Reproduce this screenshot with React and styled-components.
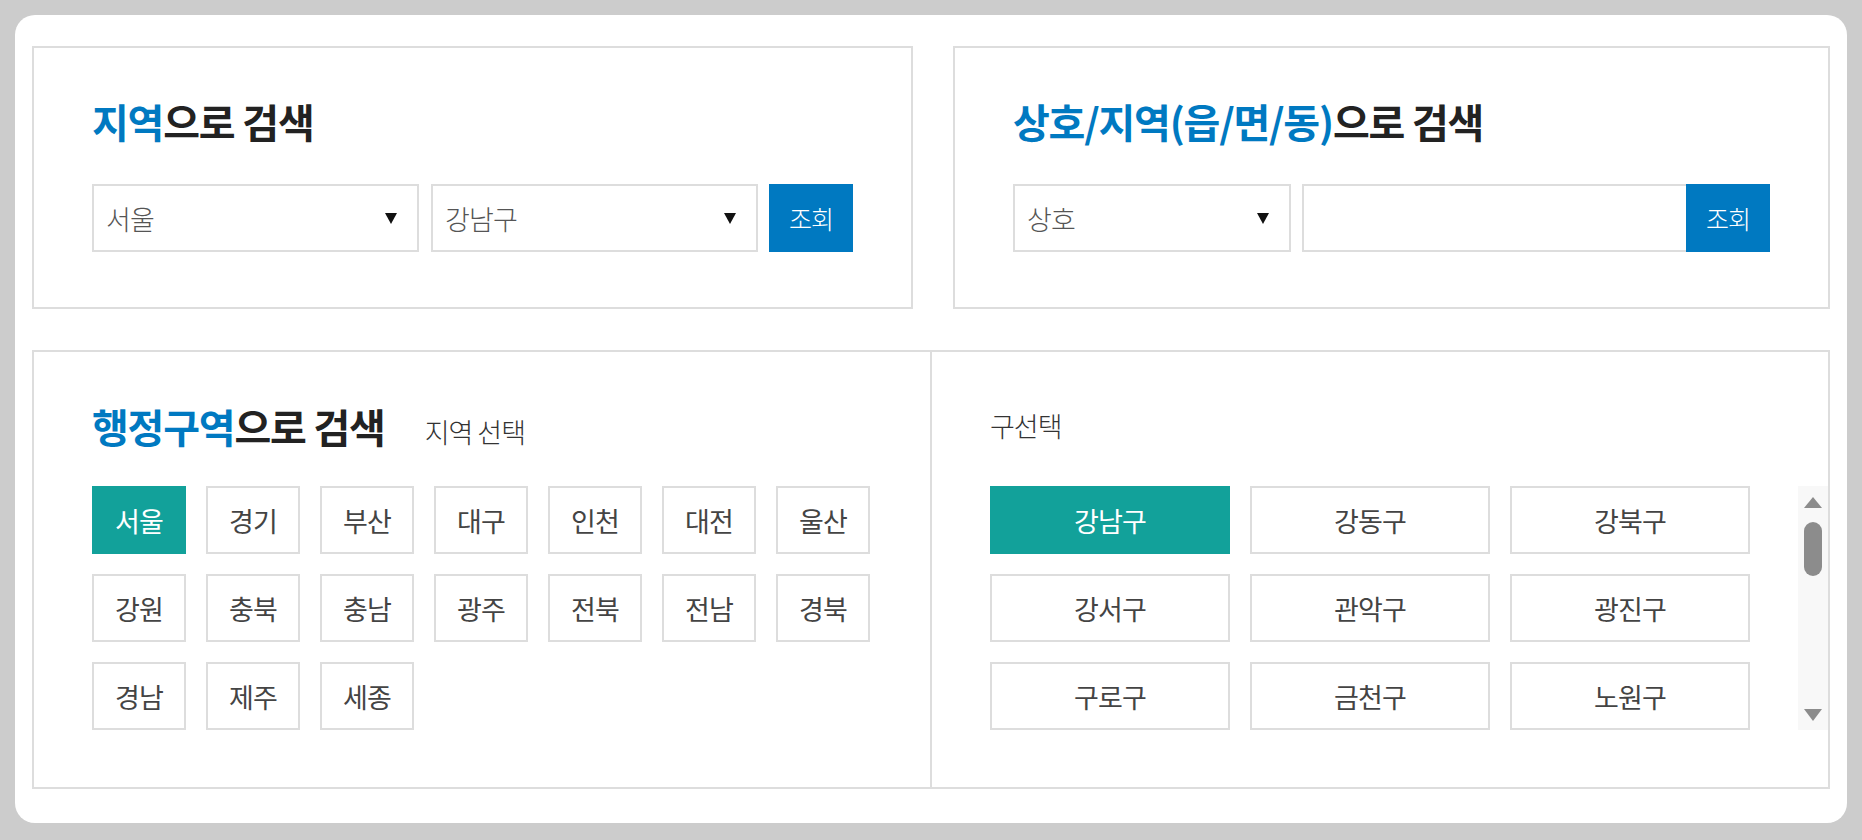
import React from 'react';
import styled, { createGlobalStyle } from 'styled-components';

const GlobalStyle = createGlobalStyle`
  html, body {
    margin: 0;
    padding: 0;
    background: #cccccc;
  }
  body {
    font-family: "Noto Sans CJK KR", "Noto Sans", sans-serif;
    color: #222222;
  }
  * {
    box-sizing: border-box;
  }
`;

const BLUE = '#0079c1';
const TEAL = '#12a19a';
const LINE = '#dddddd';
const BAR = '#8c8c8c';

const Page = styled.div`
  padding: 15px;
`;

const Card = styled.div`
  background: #ffffff;
  border-radius: 20px;
  padding: 31px 17px 34px;
  display: flex;
  flex-direction: column;
  gap: 41px;
`;

const TopRow = styled.div`
  display: grid;
  grid-template-columns: 1fr 1fr;
  gap: 40px;
`;

const Panel = styled.section`
  border: 2px solid ${LINE};
  padding: 50px 58px 55px;
`;

const Title = styled.h2`
  margin: 0;
  font-size: 40px;
  line-height: 46px;
  font-weight: 700;
  letter-spacing: -1.2px;
  color: #222222;
  white-space: nowrap;

  em {
    font-style: normal;
    color: ${BLUE};
  }
`;

const FormRow = styled.div`
  display: flex;
  margin-top: 40px;
  height: 68px;
`;

const SelectBox = styled.div`
  width: ${p => p.$w}px;
  flex: none;
  margin-right: ${p => p.$gap}px;
  border: 2px solid ${LINE};
  display: flex;
  align-items: center;
  justify-content: space-between;
  padding: 0 20px 0 12px;
  font-size: 27px;
  font-weight: 300;
  letter-spacing: -0.8px;
  color: #555555;
`;

const Arrow = styled.span`
  width: 0;
  height: 0;
  border-left: 6.5px solid transparent;
  border-right: 6.5px solid transparent;
  border-top: 11px solid #111111;
`;

const TextInput = styled.input`
  flex: 1;
  min-width: 0;
  border: 2px solid ${LINE};
  border-right: none;
  outline: none;
  font: inherit;
  font-size: 24px;
  padding: 0 14px;
`;

const SearchButton = styled.button`
  width: 84px;
  flex: none;
  border: none;
  background: ${BLUE};
  color: #ffffff;
  font-family: inherit;
  font-size: 25px;
  font-weight: 300;
  letter-spacing: -1px;
  cursor: pointer;
`;

const AreaPanel = styled.section`
  border: 2px solid ${LINE};
  display: flex;
`;

const Half = styled.div`
  flex: ${p => (p.$right ? '1 1 0' : '0 0 896px')};
  min-width: 0;
  padding: 51px ${p => (p.$right ? 0 : 58)}px 57px 58px;
  border-left: ${p => (p.$right ? `2px solid ${LINE}` : 'none')};
`;

const HeadLine = styled.div`
  display: flex;
  align-items: baseline;
  gap: 40px;
  height: 46px;
  margin-bottom: 37px;
`;

const SubLabel = styled.span`
  font-size: 27px;
  font-weight: 300;
  letter-spacing: -1px;
  color: #333333;
  line-height: 46px;
`;

const ChipGrid = styled.div`
  display: grid;
  grid-template-columns: repeat(${p => p.$cols}, ${p => p.$w}px);
  grid-auto-rows: 68px;
  gap: 20px;
`;

const Chip = styled.button`
  border: 2px solid ${p => (p.$active ? TEAL : LINE)};
  background: ${p => (p.$active ? TEAL : '#ffffff')};
  color: ${p => (p.$active ? '#ffffff' : '#444444')};
  font-family: inherit;
  font-size: 27px;
  font-weight: 400;
  letter-spacing: -0.8px;
  padding: 0;
  cursor: pointer;
`;

const ScrollArea = styled.div`
  display: flex;
  height: 244px;
`;

const ScrollView = styled.div`
  flex: 1;
  min-width: 0;
  overflow-y: auto;
  scrollbar-width: none;
`;

const ScrollTrack = styled.div`
  width: 30px;
  flex: none;
  background: #f8f8f8;
  display: flex;
  flex-direction: column;
  align-items: center;
  padding: 11px 0 9px;
`;

const TrackArrow = styled.span`
  width: 0;
  height: 0;
  border-left: 9px solid transparent;
  border-right: 9px solid transparent;
  ${p => (p.$down ? `border-top: 12px solid ${BAR};` : `border-bottom: 11px solid ${BAR};`)}
  margin-top: ${p => (p.$down ? 'auto' : '0')};
`;

const Thumb = styled.span`
  width: 18px;
  height: 54px;
  margin-top: 14px;
  border-radius: 9px;
  background: ${BAR};
`;

const regions = [
  '서울', '경기', '부산', '대구', '인천', '대전', '울산',
  '강원', '충북', '충남', '광주', '전북', '전남', '경북',
  '경남', '제주', '세종',
];

const districts = [
  '강남구', '강동구', '강북구', '강서구', '관악구', '광진구',
  '구로구', '금천구', '노원구', '도봉구', '동대문구', '동작구',
  '마포구', '서대문구', '서초구', '성동구', '성북구', '송파구',
  '양천구', '영등포구', '용산구', '은평구', '종로구', '중구', '중랑구',
];

export default function App() {
  return (
    <Page>
      <GlobalStyle />
      <Card>
        <TopRow>
          <Panel>
            <Title><em>지역</em>으로 검색</Title>
            <FormRow>
              <SelectBox $w={327} $gap={12}>서울<Arrow /></SelectBox>
              <SelectBox $w={327} $gap={11}>강남구<Arrow /></SelectBox>
              <SearchButton>조회</SearchButton>
            </FormRow>
          </Panel>
          <Panel>
            <Title><em>상호/지역(읍/면/동)</em>으로 검색</Title>
            <FormRow>
              <SelectBox $w={278} $gap={11}>상호<Arrow /></SelectBox>
              <TextInput type="text" />
              <SearchButton>조회</SearchButton>
            </FormRow>
          </Panel>
        </TopRow>

        <AreaPanel>
          <Half>
            <HeadLine>
              <Title><em>행정구역</em>으로 검색</Title>
              <SubLabel>지역 선택</SubLabel>
            </HeadLine>
            <ChipGrid $cols={7} $w={94}>
              {regions.map((r, i) => (
                <Chip key={r} $active={i === 0}>{r}</Chip>
              ))}
            </ChipGrid>
          </Half>
          <Half $right>
            <HeadLine>
              <SubLabel>구선택</SubLabel>
            </HeadLine>
            <ScrollArea>
              <ScrollView>
                <ChipGrid $cols={3} $w={240}>
                  {districts.map((d, i) => (
                    <Chip key={d} $active={i === 0}>{d}</Chip>
                  ))}
                </ChipGrid>
              </ScrollView>
              <ScrollTrack>
                <TrackArrow />
                <Thumb />
                <TrackArrow $down />
              </ScrollTrack>
            </ScrollArea>
          </Half>
        </AreaPanel>
      </Card>
    </Page>
  );
}
